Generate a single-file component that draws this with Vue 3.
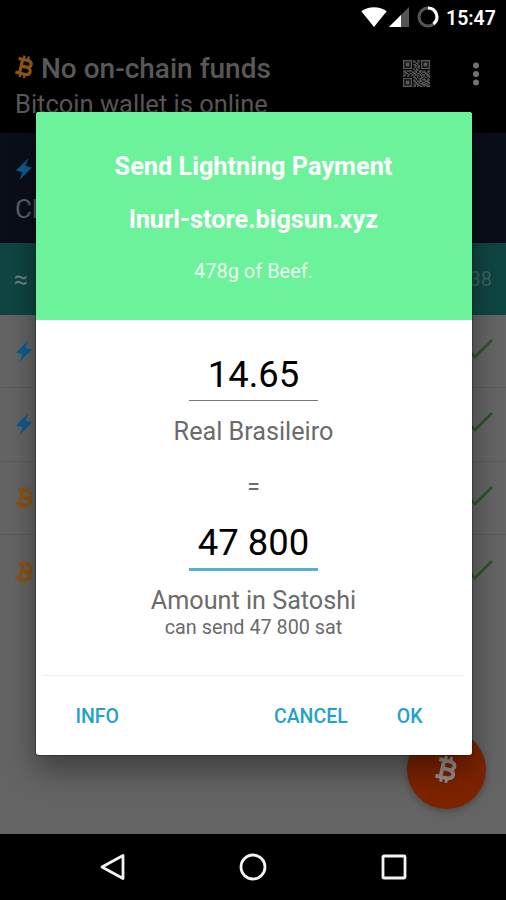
<script setup>
import { ref } from 'vue';

const fiat = ref('14.65');
const satoshi = ref('47 800');

const rows = ['bolt', 'bolt', 'coin', 'coin'];

// 21 x 21 modules, drawn as one path
const qrRows = [
  '111111101001101111111',
  '100000101100101000001',
  '101110100011001011101',
  '101110101101001011101',
  '101110100110101011101',
  '100000100101101000001',
  '111111101010101111111',
  '000000001011000000000',
  '110111100110111010011',
  '011000011010010111010',
  '101101101101101001101',
  '010010010110010110110',
  '110110101001101010011',
  '000000001101001101101',
  '111111100110111010010',
  '100000101010010111011',
  '101110101101111001110',
  '101110100110100110011',
  '101110101011011101101',
  '100000100101100111010',
  '111111101101011010111',
];

const qrPath = qrRows
  .map((row, y) => [...row].map((c, x) => (c === '1' ? `M${x} ${y}h1.1v1.1h-1.1z` : '')).join(''))
  .join('');
</script>

<template>
  <div class="screen">
    <svg class="symbols" aria-hidden="true">
      <symbol id="coin" viewBox="0 0 20 24">
        <g transform="rotate(13 10 12)" fill="none" stroke="currentColor" stroke-width="3.200">
          <path d="M1.800 5H11.200c5.600 0 5.600 6.500 .3 6.800H7M11.500 11.800c6.200.2 6 7.400-.3 7.400H1.800M6 5V19.200" />
          <path d="M7 1v4M11.400 1v4M7 19v4M11.400 19v4" stroke-width="2.400" />
        </g>
      </symbol>
      <symbol id="bolt" viewBox="0 0 16 22">
        <path d="M12.500 0 0 12.400l6.500 1.800L3.500 22 16 9.600 9.500 7.800z" fill="currentColor" />
      </symbol>
    </svg>

    <header class="status-bar">
      <svg class="wifi" viewBox="0 0 26 20">
        <path d="M13 20 .3 4.200C7.500-1 18.500-1 25.700 4.200z" fill="#fff" />
      </svg>
      <svg class="signal" viewBox="0 0 20 20">
        <path d="M0 20 20 0v20z" fill="#555" />
        <path d="M0 20 12 8v12z" fill="#fff" />
      </svg>
      <svg class="battery" viewBox="0 0 22 22" fill="none" stroke-width="3">
        <circle cx="11" cy="11" r="9" stroke="#555" />
        <path d="M11 2a9 9 0 0 1 5.500 16" stroke="#fff" />
      </svg>
      <span class="clock">15:47</span>
    </header>

    <div class="toolbar">
      <div class="toolbar-text">
        <div class="toolbar-title">
          <svg class="coin"><use href="#coin" /></svg>
          <span>No on-chain funds</span>
        </div>
        <div class="toolbar-subtitle">Bitcoin wallet is online</div>
      </div>
      <svg class="qr" viewBox="0 0 21.100 21.100"><path :d="qrPath" fill="currentColor" /></svg>
      <svg class="more" viewBox="0 0 6 24" fill="currentColor">
        <circle cx="3" cy="3.500" r="3" />
        <circle cx="3" cy="12" r="3" />
        <circle cx="3" cy="20.500" r="3" />
      </svg>
    </div>

    <div class="channels">
      <svg class="bolt"><use href="#bolt" /></svg>
      <div class="channels-text">Ch</div>
    </div>

    <div class="rate">
      <span class="approx">≈</span>
      <span class="rate-value">38</span>
    </div>

    <main class="history">
      <div v-for="(kind, i) in rows" :key="i" class="row">
        <svg :class="kind"><use :href="'#' + kind" /></svg>
        <svg class="check" viewBox="0 0 26 20">
          <path d="M1 11l7 7L25 1" fill="none" stroke="currentColor" stroke-width="2.500" />
        </svg>
      </div>
    </main>

    <nav class="nav-bar">
      <svg viewBox="0 0 28 28"><path d="M25 2.500v23L4 14z" /></svg>
      <svg viewBox="0 0 28 28"><circle cx="14" cy="14" r="12" /></svg>
      <svg viewBox="0 0 28 28"><rect x="3" y="3" width="22" height="22" rx="1" /></svg>
    </nav>

    <button class="fab"><svg><use href="#coin" /></svg></button>

    <section class="dialog">
      <div class="dialog-header">
        <div class="dialog-title">Send Lightning Payment</div>
        <div class="dialog-domain">lnurl-store.bigsun.xyz</div>
        <div class="dialog-note">478g of Beef.</div>
      </div>
      <div class="dialog-body">
        <div class="amount">{{ fiat }}</div>
        <div class="label">Real Brasileiro</div>
        <div class="equals">=</div>
        <div class="amount focused">{{ satoshi }}</div>
        <div class="label">Amount in Satoshi</div>
        <div class="hint">can send 47 800 sat</div>
      </div>
      <div class="dialog-actions">
        <button>INFO</button>
        <button class="cancel">CANCEL</button>
        <button class="ok">OK</button>
      </div>
    </section>
  </div>
</template>

<style>
body {
  margin: 0;
  background: #000;
}
</style>

<style scoped>
.screen {
  position: relative;
  display: flex;
  flex-direction: column;
  width: 506px;
  height: 900px;
  overflow: hidden;
  background: #000;
  font-family: Roboto, 'Liberation Sans', sans-serif;
}

.screen * {
  box-sizing: border-box;
}

.screen svg {
  display: block;
  flex: none;
}

.screen .symbols {
  position: absolute;
  width: 0;
  height: 0;
}

button {
  padding: 0;
  border: none;
  background: none;
  font: inherit;
}

.status-bar {
  display: flex;
  justify-content: flex-end;
  height: 36px;
  padding: 7px 11px 0 0;
  color: #fff;
}

.wifi {
  width: 26px;
  height: 20px;
}

.signal {
  width: 20px;
  height: 20px;
  margin-left: 2px;
}

.battery {
  width: 22px;
  height: 22px;
  margin: -1px 0 0 8px;
}

.clock {
  width: 49px;
  margin-left: 7px;
  font-size: 19.500px;
  font-weight: 600;
  line-height: 24px;
}

.toolbar {
  display: flex;
  height: 97px;
  padding: 0 27px 0 15px;
  color: #585858;
}

.toolbar-text {
  flex: 1;
  padding-top: 16px;
}

.toolbar-title {
  display: flex;
  gap: 6px;
  font-size: 28px;
  font-weight: 500;
  line-height: 34px;
}

.toolbar-title .coin {
  margin-top: 3px;
}

.toolbar-subtitle {
  margin-top: 1px;
  font-size: 25.500px;
  line-height: 34px;
}

.coin {
  width: 20px;
  height: 24px;
  color: #8a5312;
}

.bolt {
  width: 16px;
  height: 22px;
  color: #0d5c8f;
}

.qr {
  width: 27px;
  height: 27px;
  margin-top: 24px;
}

.more {
  width: 6px;
  height: 24px;
  margin: 26px 0 0 43px;
  color: #737373;
}

.channels {
  height: 110px;
  padding: 25px 15px 0 16px;
  background: #0a0e19;
}

.channels-text {
  margin: 13px 0 0 -1px;
  color: #5c5d60;
  font-size: 26px;
  line-height: 32px;
}

.rate {
  display: flex;
  align-items: center;
  justify-content: space-between;
  height: 72px;
  padding: 0 14px 0 14px;
  background: #0f4543;
  color: #69827f;
}

.approx {
  font-size: 25px;
}

.rate-value {
  color: #3c6261;
  font-size: 20px;
}

.history {
  flex: 1;
  background: #646464;
}

.row {
  display: flex;
  align-items: center;
  justify-content: space-between;
  height: 73.300px;
  padding: 0 13px 0 16px;
  border-bottom: 1px solid #5b5b5b;
}

.row .coin {
  margin-left: -1px;
}

.row:last-child {
  border-bottom: none;
}

.row .check {
  width: 26px;
  height: 20px;
  margin-top: -4px;
  color: #2c5428;
}

.nav-bar {
  display: flex;
  align-items: center;
  justify-content: space-between;
  height: 66px;
  padding: 0 98px;
}

.nav-bar svg {
  width: 28px;
  height: 28px;
  fill: none;
  stroke: #f4f4f4;
  stroke-width: 2.800;
  stroke-linejoin: round;
}

.fab {
  position: absolute;
  top: 730px;
  left: 407px;
  display: flex;
  align-items: center;
  justify-content: center;
  width: 79px;
  height: 79px;
  border-radius: 50%;
  background: #7d2300;
  box-shadow: 0 3px 7px rgba(0, 0, 0, 0.25);
}

.fab svg {
  width: 24px;
  height: 29px;
  color: #9a918d;
}

.dialog {
  position: absolute;
  top: 112px;
  left: 35.500px;
  width: 436px;
  height: 643px;
  overflow: hidden;
  border-radius: 3px;
  background: #fff;
  box-shadow:
    0 0 2px rgba(0, 0, 0, 0.8),
    0 14px 30px rgba(0, 0, 0, 0.4);
  text-align: center;
}

.dialog-header {
  height: 208px;
  padding-top: 39px;
  background: #6cf29b;
  color: #fff;
}

.dialog-title,
.dialog-domain {
  font-size: 25.300px;
  font-weight: 700;
  line-height: 32px;
}

.dialog-domain {
  margin-top: 21px;
}

.dialog-note {
  margin-top: 22px;
  color: #e9fff0;
  font-size: 20px;
  line-height: 26px;
}

.dialog-body {
  display: flex;
  flex-direction: column;
  align-items: center;
  height: 355px;
  padding-top: 33px;
  color: #6b6b6b;
}

.amount {
  width: 129px;
  height: 48px;
  border-bottom: 1.500px solid #777;
  color: #000;
  font-size: 36.400px;
  line-height: 43px;
}

.amount.focused {
  height: 50px;
  border-bottom: 3px solid #55b0d4;
}

.label {
  margin-top: 15px;
  font-size: 25.200px;
  line-height: 32px;
}

.equals {
  margin: 27px 0 20px;
  font-size: 23px;
  line-height: 26px;
}

.amount.focused + .label {
  margin-top: 14px;
}

.hint {
  font-size: 19.800px;
  line-height: 22px;
}

.dialog-actions {
  display: flex;
  align-items: center;
  height: 80px;
  margin: 0 7px;
  padding: 2px 42px 0 33px;
  border-top: 1px solid #eee;
  color: #22a2cb;
  font-size: 19.500px;
  font-weight: 500;
}

.dialog-actions button {
  color: inherit;
}

.dialog-actions .cancel {
  margin-left: auto;
}

.dialog-actions .ok {
  margin-left: 49px;
}
</style>
